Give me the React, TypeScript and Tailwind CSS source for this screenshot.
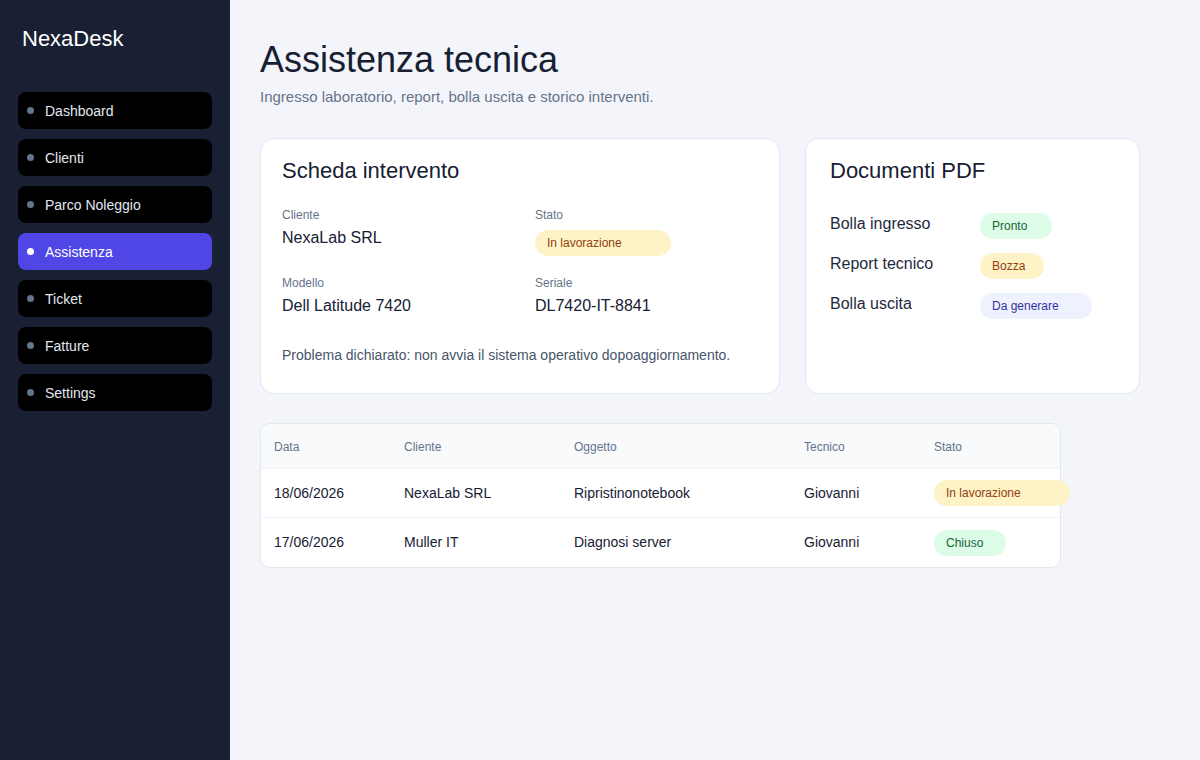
import React from "react";

const nav = ["Dashboard", "Clienti", "Parco Noleggio", "Assistenza", "Ticket", "Fatture", "Settings"];

type Tone = "amber" | "green" | "indigo";

const toneClass: Record<Tone, string> = {
  amber: "bg-[#fef3c7] text-[#92400e]",
  green: "bg-[#dcfce7] text-[#166534]",
  indigo: "bg-[#eef2ff] text-[#3730a3]",
};

function Badge({ label, tone, width }: { label: string; tone: Tone; width: string }) {
  return (
    <span
      className={`inline-flex h-[26px] shrink-0 items-center rounded-full pl-3 text-[12px] leading-none ${toneClass[tone]} ${width}`}
    >
      {label}
    </span>
  );
}

function Field({ label, children }: { label: string; children: React.ReactNode }) {
  return (
    <div className="flex flex-col">
      <span className="text-[12px] leading-[16px] text-[#64748b]">{label}</span>
      <div className="mt-[5px]">{children}</div>
    </div>
  );
}

const rows = [
  { data: "18/06/2026", cliente: "NexaLab SRL", oggetto: "Ripristinonotebook", tecnico: "Giovanni", stato: "In lavorazione", tone: "amber" as Tone, w: "w-[136px]" },
  { data: "17/06/2026", cliente: "Muller IT", oggetto: "Diagnosi server", tecnico: "Giovanni", stato: "Chiuso", tone: "green" as Tone, w: "w-[72px]" },
];

export default function App() {
  return (
    <div className="flex h-[760px] w-full font-['Liberation_Sans',Arial,sans-serif] text-[#172033]">
      <aside className="flex w-[230px] shrink-0 flex-col bg-[#1a2033] px-[18px] pt-[26px]">
        <div className="pl-[4px] text-[22px] leading-[26px] text-white">NexaDesk</div>
        <nav className="mt-[40px] flex flex-col gap-[10px]">
          {nav.map((item) => {
            const active = item === "Assistenza";
            return (
              <div
                key={item}
                className={`flex h-[37px] items-center gap-[11px] rounded-lg pl-[9px] pt-[2px] text-[14px] ${
                  active ? "bg-[#4f46e5] text-white" : "bg-black text-[#e2e8f0]"
                }`}
              >
                <span className={`-mt-[2px] h-[7px] w-[7px] rounded-full ${active ? "bg-white" : "bg-[#64748b]"}`} />
                <span>{item}</span>
              </div>
            );
          })}
        </nav>
      </aside>

      <main className="flex-1 bg-[#f4f5fa] pl-[30px] pt-[38px]">
        <h1 className="text-[36px] leading-[44px] text-[#172033]">Assistenza tecnica</h1>
        <p className="mt-[6px] text-[15px] leading-[18px] text-[#64748b]">
          Ingresso laboratorio, report, bolla uscita e storico interventi.
        </p>

        <div className="mt-[32px] flex gap-[25px]">
          <section className="h-[256px] w-[520px] shrink-0 rounded-[14px] border border-[#e2e8f0] bg-white px-[21px] pt-[18px]">
            <h2 className="text-[22px] leading-[28px] text-[#172033]">Scheda intervento</h2>
            <div className="mt-[22px] grid grid-cols-2 gap-x-[30px] gap-y-[19px]">
              <Field label="Cliente">
                <div className="text-[16px] leading-[20px]">NexaLab SRL</div>
              </Field>
              <Field label="Stato">
                <div className="mt-[2px]">
                  <Badge label="In lavorazione" tone="amber" width="w-[136px]" />
                </div>
              </Field>
              <Field label="Modello">
                <div className="text-[16px] leading-[20px]">Dell Latitude 7420</div>
              </Field>
              <Field label="Seriale">
                <div className="text-[16px] leading-[20px]">DL7420-IT-8841</div>
              </Field>
            </div>
            <p className="mt-[30px] text-[14px] leading-[18px] text-[#475569]">
              Problema dichiarato: non avvia il sistema operativo dopoaggiornamento.
            </p>
          </section>

          <section className="h-[256px] w-[335px] shrink-0 rounded-[14px] border border-[#e2e8f0] bg-white px-[24px] pt-[18px]">
            <h2 className="text-[22px] leading-[28px] text-[#172033]">Documenti PDF</h2>
            <div className="mt-[28px] flex flex-col gap-[14px]">
              {[
                { l: "Bolla ingresso", b: "Pronto", t: "green" as Tone, w: "w-[72px]" },
                { l: "Report tecnico", b: "Bozza", t: "amber" as Tone, w: "w-[64px]" },
                { l: "Bolla uscita", b: "Da generare", t: "indigo" as Tone, w: "w-[112px]" },
              ].map((r) => (
                <div key={r.l} className="flex items-center">
                  <span className="-mt-[4px] w-[150px] shrink-0 text-[16px] leading-[20px] text-[#1e293b]">{r.l}</span>
                  <Badge label={r.b} tone={r.t} width={r.w} />
                </div>
              ))}
            </div>
          </section>
        </div>

        <div className="mt-[29px] w-[801px] rounded-[10px] border border-[#e2e8f0] bg-white">
          <div className="flex h-[45px] items-center rounded-t-[10px] border-b border-[#eef2f7] bg-[#f8fafc] pl-[13px] pt-[2px] text-[12px] text-[#64748b]">
            <span className="w-[130px] shrink-0">Data</span>
            <span className="w-[170px] shrink-0">Cliente</span>
            <span className="w-[230px] shrink-0">Oggetto</span>
            <span className="w-[130px] shrink-0">Tecnico</span>
            <span>Stato</span>
          </div>
          {rows.map((r, i) => (
            <div
              key={r.data}
              className={`flex h-[49px] items-center pl-[13px] text-[14px] text-[#172033] ${
                i < rows.length - 1 ? "border-b border-[#eef2f7]" : ""
              }`}
            >
              <span className="w-[130px] shrink-0">{r.data}</span>
              <span className="w-[170px] shrink-0">{r.cliente}</span>
              <span className="w-[230px] shrink-0">{r.oggetto}</span>
              <span className="w-[130px] shrink-0">{r.tecnico}</span>
              <Badge label={r.stato} tone={r.tone} width={r.w} />
            </div>
          ))}
        </div>
      </main>
    </div>
  );
}
